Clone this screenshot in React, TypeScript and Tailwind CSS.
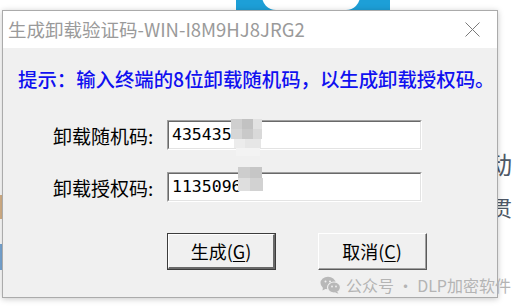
import React from 'react'

const cjk = { fontFamily: '"Noto Sans CJK SC", "Noto Sans", sans-serif' }

const mosaic = [
  // [left, top, w, h, color]
  [231, 119, 11, 10, '#cfcfcf'],
  [242, 119, 11, 10, '#c2c2c2'],
  [253, 119, 9, 10, '#e2e2e2'],
  [231, 129, 11, 10, '#d6d6d6'],
  [242, 129, 11, 10, '#c9c9c9'],
  [253, 129, 9, 10, '#d9d9d9'],
  [234, 139, 11, 9, '#ececec'],
  [245, 139, 16, 9, '#e6e6e6'],
  [236, 148, 24, 8, '#f3f3f3'],
  [238, 167, 12, 11, '#cdcdcd'],
  [250, 167, 12, 11, '#c6c6c6'],
  [238, 178, 12, 13, '#dedede'],
  [250, 178, 13, 13, '#d2d2d2'],
]

function WeChatIcon() {
  return (
    <svg width="21" height="18" viewBox="0 0 21 18">
      <ellipse cx="8" cy="7" rx="7.5" ry="6.3" fill="#b8b8b8" />
      <path d="M3 11 L2.5 14.5 L6.5 12.5 Z" fill="#b8b8b8" />
      <ellipse cx="14" cy="11.5" rx="6.5" ry="5.5" fill="#b8b8b8" stroke="#f0f0f0" strokeWidth="1.2" />
      <path d="M17 15.5 L18.5 17.8 L15 16.5 Z" fill="#b8b8b8" />
      <circle cx="5.5" cy="5.5" r="1" fill="#f0f0f0" />
      <circle cx="10" cy="5.5" r="1" fill="#f0f0f0" />
      <circle cx="12" cy="10.5" r="0.9" fill="#f0f0f0" />
      <circle cx="16" cy="10.5" r="0.9" fill="#f0f0f0" />
    </svg>
  )
}

function SunkenInput({ value }: { value: string }) {
  return (
    <div className="w-[255px] h-[30px] border-t border-l border-t-[#a0a0a0] border-l-[#a0a0a0] border-b border-r border-b-white border-r-white">
      <div className="w-full h-full border-t border-l border-t-[#696969] border-l-[#696969] border-b border-r border-b-[#e3e3e3] border-r-[#e3e3e3] bg-white flex items-center pl-[3px]">
        <span className="text-[16.5px] text-black leading-none" style={{ fontFamily: '"DejaVu Sans Mono", monospace' }}>
          {value}
        </span>
      </div>
    </div>
  )
}

function WinButton({ label, hotkey, isDefault }: { label: string; hotkey: string; isDefault?: boolean }) {
  return (
    <button
      className={
        'w-[109px] h-[37px] ' +
        (isDefault
          ? 'border border-[#3c3c3c]'
          : 'border-t border-l border-t-white border-l-white border-b border-r border-b-[#5a5a5a] border-r-[#5a5a5a]')
      }
    >
      <div
        className={
          'w-full h-full flex items-center justify-center bg-[#f0f0f0] ' +
          (isDefault
            ? 'border-t border-l border-t-white border-l-white border-b-2 border-r-2 border-b-[#696969] border-r-[#696969]'
            : 'border-b border-r border-b-[#a0a0a0] border-r-[#a0a0a0]')
        }
      >
        <span className="text-[18px] text-black leading-none" style={cjk}>
          {label}(<span className="underline underline-offset-2">{hotkey}</span>)
        </span>
      </div>
    </button>
  )
}

export default function App() {
  return (
    <div className="relative w-[513px] h-[307px] bg-white overflow-hidden">
      {/* desktop behind the dialog */}
      <div className="absolute left-[236px] top-0 w-[154px] h-[11px] bg-[#1d9fd7]" />
      <div className="absolute left-[262px] -top-[4px] w-[98px] h-[14px] bg-white rounded-b-[14px]" />
      <span className="absolute left-[488px] top-[152px] text-[24px] text-[#4e5866] leading-none" style={cjk}>
        动
      </span>
      <span className="absolute left-[491px] top-[197px] text-[21px] text-[#4e5866] leading-none" style={cjk}>
        贯
      </span>
      <div className="absolute left-0 top-[195px] w-[2px] h-[24px] bg-[#d9b48a]" />
      <div className="absolute left-0 top-[244px] w-[2px] h-[26px] bg-[#7aa9d8]" />

      {/* dialog window */}
      <div className="absolute left-[2px] top-[10px] w-[496px] h-[288px] border border-[#ababab] shadow-[0_1px_6px_rgba(0,0,0,0.22)] flex flex-col">
        <div className="h-[37px] bg-white flex items-center justify-between pl-[5px] pr-[17px]">
          <span className="text-[18.5px] text-[#9a9a9a] leading-none" style={cjk}>
            生成卸载验证码-WIN-I8M9HJ8JRG2
          </span>
          <svg width="15" height="15" viewBox="0 0 15 15">
            <path d="M0.5 0.5 L14.5 14.5 M14.5 0.5 L0.5 14.5" stroke="#7a7a7a" strokeWidth="1" />
          </svg>
        </div>

        <div className="flex-1 bg-[#f0f0f0] flex flex-col" style={cjk}>
          <p className="pl-[15px] pt-[21px] text-[19.4px] leading-[20px] text-[#1010f0] font-medium whitespace-nowrap">
            提示：输入终端的8位卸载随机码，以生成卸载授权码。
          </p>

          <div className="mt-[31px] flex items-center pl-[50px]">
            <span className="w-[114px] text-[19px] text-black leading-none">卸载随机码:</span>
            <SunkenInput value="435435" />
          </div>

          <div className="mt-[22px] flex items-center pl-[50px]">
            <span className="w-[114px] text-[19px] text-black leading-none">卸载授权码:</span>
            <SunkenInput value="1135096" />
          </div>

          <div className="mt-[31px] flex gap-[42px] pl-[164px]">
            <WinButton label="生成" hotkey="G" isDefault />
            <WinButton label="取消" hotkey="C" />
          </div>
        </div>
      </div>

      {/* censor mosaic */}
      {mosaic.map(([l, t, w, h, c], i) => (
        <div
          key={i}
          className="absolute"
          style={{ left: l as number, top: t as number, width: w as number, height: h as number, background: c as string }}
        />
      ))}

      {/* watermark */}
      <div className="absolute left-[320px] top-[276px] flex items-center gap-[5px] whitespace-nowrap">
        <WeChatIcon />
        <span className="text-[16px] text-[#b4b4b4] leading-none" style={cjk}>
          公众号 · DLP加密软件
        </span>
      </div>
    </div>
  )
}
